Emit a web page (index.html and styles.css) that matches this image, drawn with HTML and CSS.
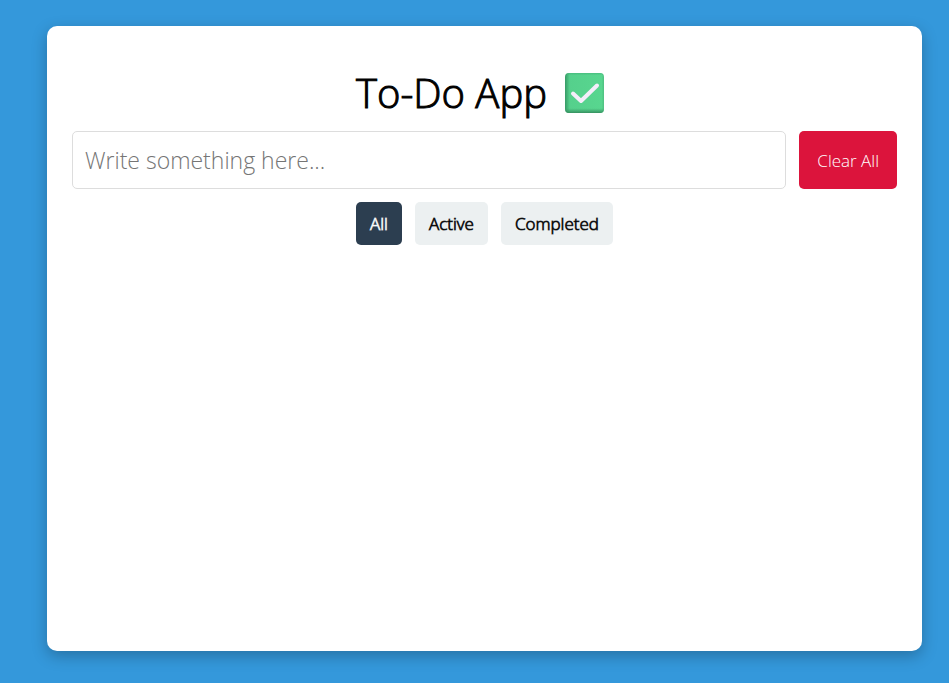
FILE: index.html
```html
<!DOCTYPE html>
<html lang="en">
<head>
  <meta charset="utf-8">
  <title>To-Do App</title>
  <link rel="stylesheet" href="styles.css">
</head>
<body>
  <main class="card">
    <h1 class="title">
      <span class="title-text">To-Do App</span>
      <svg class="title-icon" viewBox="0 0 40 40" aria-hidden="true">
        <defs>
          <linearGradient id="side" x1="0" x2="1" y1="0" y2="0">
            <stop offset="0" stop-color="#369a66"/>
            <stop offset="0.12" stop-color="#55d08c"/>
            <stop offset="0.94" stop-color="#58d68f"/>
            <stop offset="1" stop-color="#4fbf80"/>
          </linearGradient>
          <linearGradient id="base" x1="0" x2="0" y1="0" y2="1">
            <stop offset="0" stop-color="#3aa870" stop-opacity="0.5"/>
            <stop offset="0.06" stop-color="#3aa870" stop-opacity="0"/>
            <stop offset="0.88" stop-color="#3a9a68" stop-opacity="0"/>
            <stop offset="1" stop-color="#36905f"/>
          </linearGradient>
        </defs>
        <rect width="39" height="40" rx="4" fill="url(#side)"/>
        <rect width="39" height="40" rx="4" fill="url(#base)"/>
        <path d="M8 20.500 L16 28 L32 12.500" fill="none" stroke="#f5edfa" stroke-width="4" stroke-linecap="round" stroke-linejoin="round"/>
      </svg>
    </h1>
    <form class="entry">
      <input class="entry-input" type="text" placeholder="Write something here..." aria-label="New task">
      <button class="clear" type="button">Clear All</button>
    </form>
    <div class="filters">
      <button class="filter filter-active" type="button">All</button>
      <button class="filter" type="button">Active</button>
      <button class="filter" type="button">Completed</button>
    </div>
  </main>
</body>
</html>
```

FILE: styles.css
```css
* {
  box-sizing: border-box;
}

body {
  display: flex;
  min-height: 100vh;
  margin: 0;
  padding: 26px 27px 32px 47px;
  background: #3498db;
  font-family: "Open Sans", sans-serif;
  font-weight: 300;
}

.card {
  flex: 1;
  padding: 40px 25px;
  border-radius: 10px;
  background: #fff;
  box-shadow: 0 5px 15px rgba(0, 0, 0, 0.25);
}

.title {
  display: flex;
  align-items: center;
  justify-content: center;
  gap: 18px;
  margin: 0 8px 11px 0;
  font-size: 40px;
  font-weight: 300;
  line-height: 54px;
}

.title-text {
  -webkit-text-stroke: 1px #000;
}

.title-icon {
  width: 40px;
  height: 40px;
}

.entry {
  display: flex;
  gap: 13px;
  margin-bottom: 13px;
}

.entry-input {
  flex: 1;
  min-width: 0;
  height: 58px;
  padding: 0 12px;
  border: 1px solid #ddd;
  border-radius: 5px;
  font: inherit;
  font-size: 23px;
}

.clear,
.filter {
  border: 0;
  border-radius: 5px;
  font: inherit;
  font-size: 17px;
}

.clear {
  padding: 0 18px;
  background: #dc143c;
  color: #fff;
}

.filters {
  display: flex;
  justify-content: center;
  gap: 13px;
}

.filter {
  height: 43px;
  padding: 0 14px;
  background: #ecf0f1;
  color: #000;
  -webkit-text-stroke: 1px rgba(0, 0, 0, 0.7);
}

.filter-active {
  background: #2c3e50;
  color: #fff;
  -webkit-text-stroke-color: rgba(255, 255, 255, 0.7);
}
```
